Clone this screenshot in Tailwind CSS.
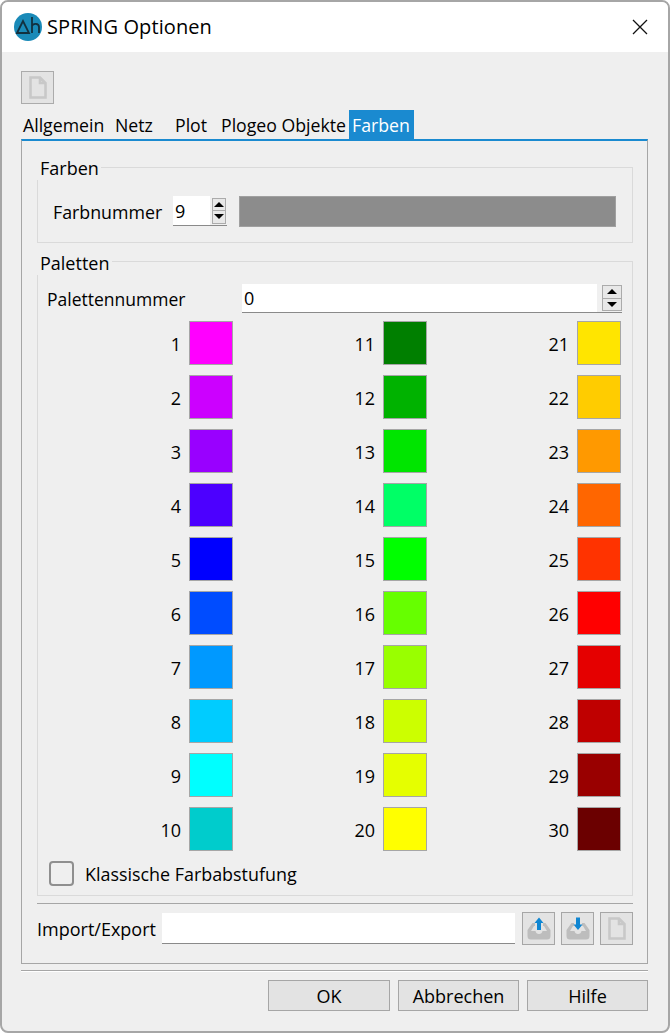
<!DOCTYPE html>
<html lang="de">
  <head>
    <meta charset="UTF-8" />
    <meta name="viewport" content="width=device-width, initial-scale=1.0"/>
    <title>SPRING Optionen</title>
    <script src="https://cdn.jsdelivr.net/npm/@tailwindcss/browser@4"></script>
  </head>
  <body class="bg-white">
    <div class="w-[670px] h-[1033px] flex flex-col overflow-hidden rounded-lg border-2 border-[#a6a6a6] bg-[#efefef] text-black text-[18px] leading-[24px] font-['Open_Sans',sans-serif]">

      <!-- Title bar -->
      <div class="h-[50px] shrink-0 bg-white flex items-center pl-[12px] pr-[20px]">
        <svg class="w-[28px] h-[28px] shrink-0" viewBox="0 0 28 28">
          <circle cx="14" cy="14" r="14" fill="#1a8ab8"/>
          <path d="M3 20 L9 8 L15 20 Z" fill="none" stroke="#12303f" stroke-width="1.8"/>
          <path d="M18 4 V20 M18 13 C19 10 25 10 25 14 V20" fill="none" stroke="#12303f" stroke-width="1.8"/>
        </svg>
        <span class="ml-[5px] text-[20px] tracking-[0.1px]">SPRING Optionen</span>
        <svg class="ml-auto w-[16px] h-[16px]" viewBox="0 0 16 16">
          <path d="M1 1 L15 15 M15 1 L1 15" stroke="#111" stroke-width="1.3" fill="none"/>
        </svg>
      </div>

      <div class="flex-1 flex flex-col pl-[19px] pr-[20px]">
        <!-- Toolbar -->
        <div class="pt-[19px] h-[58px] shrink-0">
          <button class="w-[33px] h-[33px] flex items-center justify-center border border-[#ababab] bg-[#e3e3e3]">
            <svg class="w-[18px] h-[23px]" viewBox="0 0 18 23"><path d="M1.5 1.5 H11 L16.5 7 V21.5 H1.5 Z M11 1.5 V7 H16.5" fill="none" stroke="#c8c8c8" stroke-width="2.6"/></svg>
          </button>
        </div>

        <!-- Tabs -->
        <div class="flex h-[29px] shrink-0 text-[17.7px] whitespace-nowrap">
          <span class="w-[94px] pl-[2px] leading-[30px]">Allgemein</span>
          <span class="w-[60px] leading-[30px]">Netz</span>
          <span class="w-[46px] leading-[30px]">Plot</span>
          <span class="w-[128px] leading-[30px]">Plogeo Objekte</span>
          <span class="w-[65px] bg-[#1a8ad0] text-white pl-[3px] leading-[30px]">Farben</span>
        </div>

        <!-- Tab pane -->
        <div class="h-[825px] shrink-0 border border-[#a6a6a6] border-t-2 border-t-[#1a8ad0] pl-[15px] pr-[14px] flex flex-col">

          <!-- Farben group -->
          <div class="relative mt-[26px] h-[76px] shrink-0 border border-[#dadada] flex items-start pt-[28px] pl-[15px] pr-[16px]">
            <span class="absolute left-[-1px] top-[-12px] bg-[#efefef] pl-[3px] pr-[2px]">Farben</span>
            <span class="w-[120px] mt-[4px] text-[17.8px]">Farbnummer</span>
            <div class="w-[54px] h-[30px] bg-white border-b border-[#8a8a8a] flex items-center justify-between pl-[2px]">
              <span>9</span>
              <div class="w-[17px] h-full bg-[#f0f0f0] flex items-center justify-center">
                <div class="w-[14px] h-[26px] flex flex-col border border-[#ababab] bg-[#e8e8e8]">
                  <div class="flex-1 flex items-center justify-center border-b border-[#ababab]"><div class="w-0 h-0 border-x-[5px] border-x-transparent border-b-[5px] border-b-black"></div></div>
                  <div class="flex-1 flex items-center justify-center"><div class="w-0 h-0 border-x-[5px] border-x-transparent border-t-[5px] border-t-black"></div></div>
                </div>
              </div>
            </div>
            <div class="ml-[12px] flex-1 h-[31px] bg-[#8c8c8c] border border-[#a0a0a0]"></div>
          </div>

          <!-- Paletten group -->
          <div class="relative mt-[18px] h-[635px] shrink-0 border border-[#dadada] flex flex-col">
            <span class="absolute left-[-1px] top-[-11px] bg-[#efefef] pl-[3px] pr-[3px]">Paletten</span>
            <div class="flex items-center pl-[9px] pr-[10px] pt-[22px] shrink-0">
              <span class="w-[195px] text-[17.5px]">Palettennummer</span>
              <div class="flex-1 h-[29px] bg-white border-b border-[#8a8a8a] flex items-center justify-between pl-[2px]">
                <span>0</span>
                <div class="w-[25px] h-full bg-[#f0f0f0] flex items-center justify-end">
                  <div class="w-[20px] h-[26px] flex flex-col border border-[#ababab] bg-[#e8e8e8]">
                    <div class="flex-1 flex items-center justify-center border-b border-[#ababab]"><div class="w-0 h-0 border-x-[5px] border-x-transparent border-b-[5px] border-b-black"></div></div>
                    <div class="flex-1 flex items-center justify-center"><div class="w-0 h-0 border-x-[5px] border-x-transparent border-t-[5px] border-t-black"></div></div>
                  </div>
                </div>
              </div>
            </div>
            <div id="swatches" class="grid grid-cols-[195px_194px_194px] grid-rows-[repeat(10,44px)] grid-flow-col gap-y-[10px] mt-[8px]"></div>
            <div class="flex items-center ml-[11px] mt-[10px]">
              <div class="w-[25px] h-[25px] rounded-[4px] border-2 border-[#8f8f8f]"></div>
              <span class="ml-[11px] text-[17.9px]">Klassische Farbabstufung</span>
            </div>
          </div>

          <!-- Import/Export -->
          <div class="mt-[7px] border-t border-[#a6a6a6] flex items-center pt-[8px] shrink-0">
            <span class="w-[125px]">Import/Export</span>
            <div class="w-[353px] h-[31px] bg-white border-b border-[#8a8a8a]"></div>
            <button class="ml-[7px] w-[33px] h-[33px] flex items-center justify-center border border-[#a6a6a6] bg-[#e3e3e3]">
              <svg class="w-[24px] h-[23px]" viewBox="0 0 24 23">
                <path d="M5.5 6 L0.5 13 V19 Q0.5 22.5 4 22.5 H20 Q23.5 22.5 23.5 19 V13 L18.5 6 H16 V9 H17 L20 14 H15.5 Q15 17 12 17 Q9 17 8.5 14 H4 L7 9 H8 V6 Z" fill="#bdbdbd"/>
                <path d="M12 0.5 L16.5 6 H14 V13 H10 V6 H7.5 Z" fill="#0f86d2"/>
              </svg>
            </button>
            <button class="ml-[6px] w-[33px] h-[33px] flex items-center justify-center border border-[#a6a6a6] bg-[#e3e3e3]">
              <svg class="w-[24px] h-[23px]" viewBox="0 0 24 23">
                <path d="M5.5 6 L0.5 13 V19 Q0.5 22.5 4 22.5 H20 Q23.5 22.5 23.5 19 V13 L18.5 6 H16 V9 H17 L20 14 H15.5 Q15 17 12 17 Q9 17 8.5 14 H4 L7 9 H8 V6 Z" fill="#bdbdbd"/>
                <path d="M12 13 L7.5 7.5 H10 V0.5 H14 V7.5 H16.5 Z" fill="#0f86d2"/>
              </svg>
            </button>
            <button class="ml-[6px] w-[33px] h-[33px] flex items-center justify-center border border-[#a6a6a6] bg-[#e3e3e3]">
              <svg class="w-[18px] h-[23px]" viewBox="0 0 18 23"><path d="M1.5 1.5 H11 L16.5 7 V21.5 H1.5 Z M11 1.5 V7 H16.5" fill="none" stroke="#c8c8c8" stroke-width="2.6"/></svg>
            </button>
          </div>
        </div>

        <!-- Footer -->
        <div class="mt-[6px] border-t border-[#a6a6a6] shadow-[inset_0_1px_0_#ffffff] pt-[9px] flex justify-end gap-[8px]">
          <button class="w-[122px] h-[31px] border border-[#a6a6a6] bg-[#e3e3e3]">OK</button>
          <button class="w-[121px] h-[31px] border border-[#a6a6a6] bg-[#e3e3e3]">Abbrechen</button>
          <button class="w-[121px] h-[31px] border border-[#a6a6a6] bg-[#e3e3e3]">Hilfe</button>
        </div>
      </div>
    </div>

    <script>
      const colors = [
        "#ff00ff", "#cc00ff", "#9900ff", "#4c00ff", "#0000ff", "#004cff", "#0099ff", "#00ccff", "#00ffff", "#00cccc",
        "#007f00", "#00b200", "#00e500", "#00ff66", "#00ff00", "#66ff00", "#99ff00", "#ccff00", "#e5ff00", "#ffff00",
        "#ffe500", "#ffcc00", "#ff9900", "#ff6600", "#ff3300", "#ff0000", "#e50000", "#bf0000", "#990000", "#6b0000"
      ];
      const swatches = document.getElementById("swatches");
      colors.forEach((color, i) => {
        const cell = document.createElement("div");
        cell.className = "flex items-center justify-end";
        cell.innerHTML = `<span class="mr-[8px] mt-[2px]">${i + 1}</span><div class="w-[44px] h-[44px] border border-[#a6a6a6]" style="background-color: ${color}"></div>`;
        swatches.appendChild(cell);
      });
    </script>
  </body>
</html>
